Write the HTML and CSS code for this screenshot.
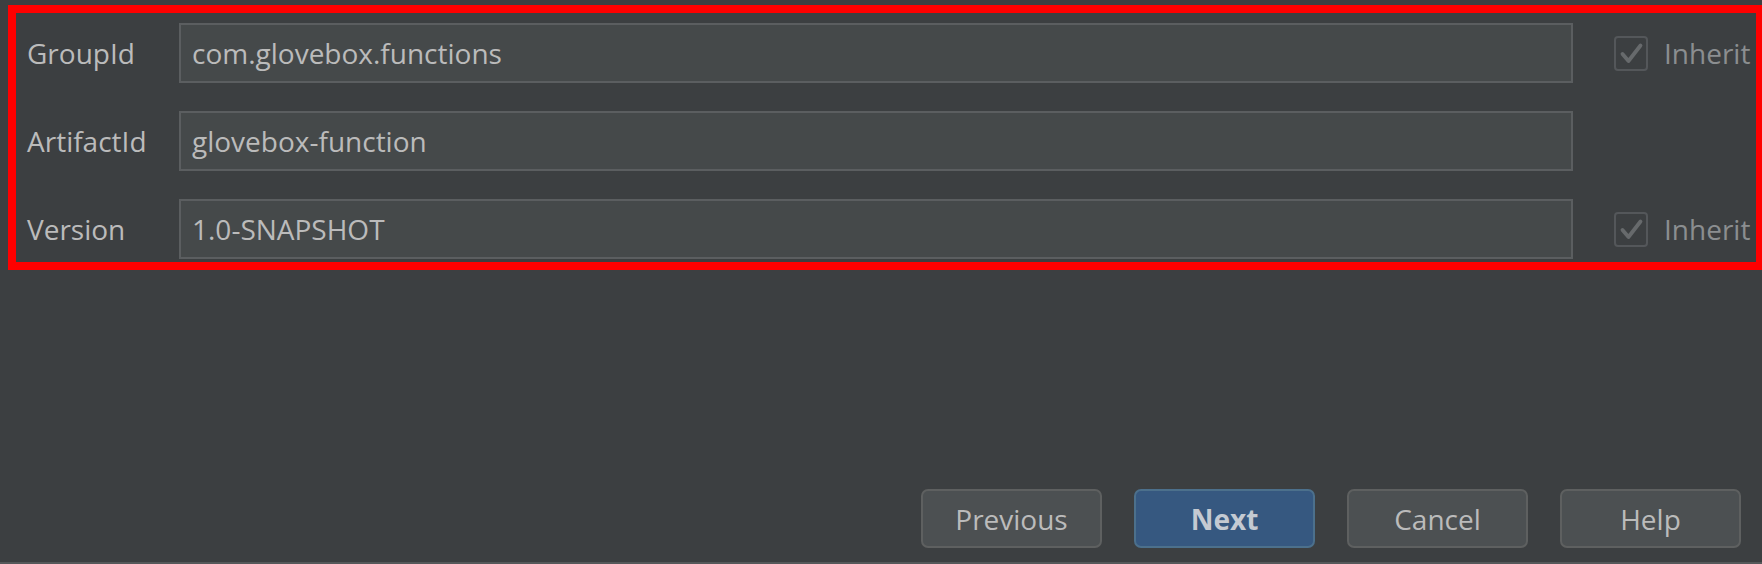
FILE: index.html
```html
<!DOCTYPE html>
<html>
<head>
<meta charset="utf-8">
<link rel="stylesheet" href="styles.css">
</head>
<body>
<div class="page">
  <div class="form">
    <div class="label">GroupId</div>
    <div class="field">com.glovebox.functions</div>
    <div class="inherit">
      <span class="check"><svg viewBox="0 0 34 35" width="34" height="35"><path d="M8.5 18 L14.5 25 L26.5 9.5" fill="none" stroke="#676a6c" stroke-width="3.8" stroke-linecap="round" stroke-linejoin="round"/></svg></span>
      <span class="inherit-text">Inherit</span>
    </div>

    <div class="label">ArtifactId</div>
    <div class="field">glovebox-function</div>
    <div class="inherit"></div>

    <div class="label">Version</div>
    <div class="field">1.0-SNAPSHOT</div>
    <div class="inherit">
      <span class="check"><svg viewBox="0 0 34 35" width="34" height="35"><path d="M8.5 18 L14.5 25 L26.5 9.5" fill="none" stroke="#676a6c" stroke-width="3.8" stroke-linecap="round" stroke-linejoin="round"/></svg></span>
      <span class="inherit-text">Inherit</span>
    </div>
  </div>

  <div class="spacer"></div>

  <div class="buttons">
    <button class="btn">Previous</button>
    <button class="btn btn-default">Next</button>
    <button class="btn">Cancel</button>
    <button class="btn">Help</button>
  </div>
</div>
</body>
</html>
```

FILE: styles.css
```css
html, body {
  margin: 0;
  padding: 0;
  background: #3c3f41;
  overflow: hidden;
}

.page {
  height: 564px;
  box-sizing: border-box;
  display: flex;
  flex-direction: column;
  font-family: "Open Sans", "Noto Sans", sans-serif;
  font-size: 28px;
  color: #bbbbbb;
  border-bottom: 2px solid #55585a;
  padding-top: 5px;
}

.form {
  margin-left: 8px;
  border: 8px solid #ff0000;
  border-right-width: 6px;
  padding: 10px 0 3px 11px;
  display: grid;
  grid-template-columns: 152px 1fr 142px;
  column-gap: 0;
  row-gap: 28px;
  align-items: center;
}

.label {
  color: #bbbbbb;
  white-space: nowrap;
}

.field {
  height: 60px;
  box-sizing: border-box;
  background: #45494a;
  border: 2px solid #5b5e60;
  padding: 0 11px;
  display: flex;
  align-items: center;
  color: #bbbbbb;
  margin-right: 41px;
  white-space: nowrap;
}

.inherit {
  display: flex;
  align-items: center;
  gap: 16px;
  white-space: nowrap;
}

.check {
  flex: none;
  width: 34px;
  height: 35px;
  box-sizing: border-box;
  border: 2px solid #54575a;
  border-radius: 4px;
  display: flex;
  align-items: center;
  justify-content: center;
}

.check svg {
  display: block;
  margin: -2px;
}

.inherit-text {
  color: #8b8e90;
}

.spacer {
  flex: 1;
}

.buttons {
  display: flex;
  justify-content: flex-end;
  gap: 32px;
  padding-right: 21px;
  padding-bottom: 14px;
}

.btn {
  width: 181px;
  height: 59px;
  box-sizing: border-box;
  background: #4c5052;
  border: 2px solid #5e6060;
  border-radius: 7px;
  color: #bbbbbb;
  font-family: "Open Sans", "Noto Sans", sans-serif;
  font-size: 28px;
  padding: 0;
}

.btn-default {
  background: #365880;
  border-color: #4c708c;
  font-weight: bold;
  color: #c4cad2;
}
```
